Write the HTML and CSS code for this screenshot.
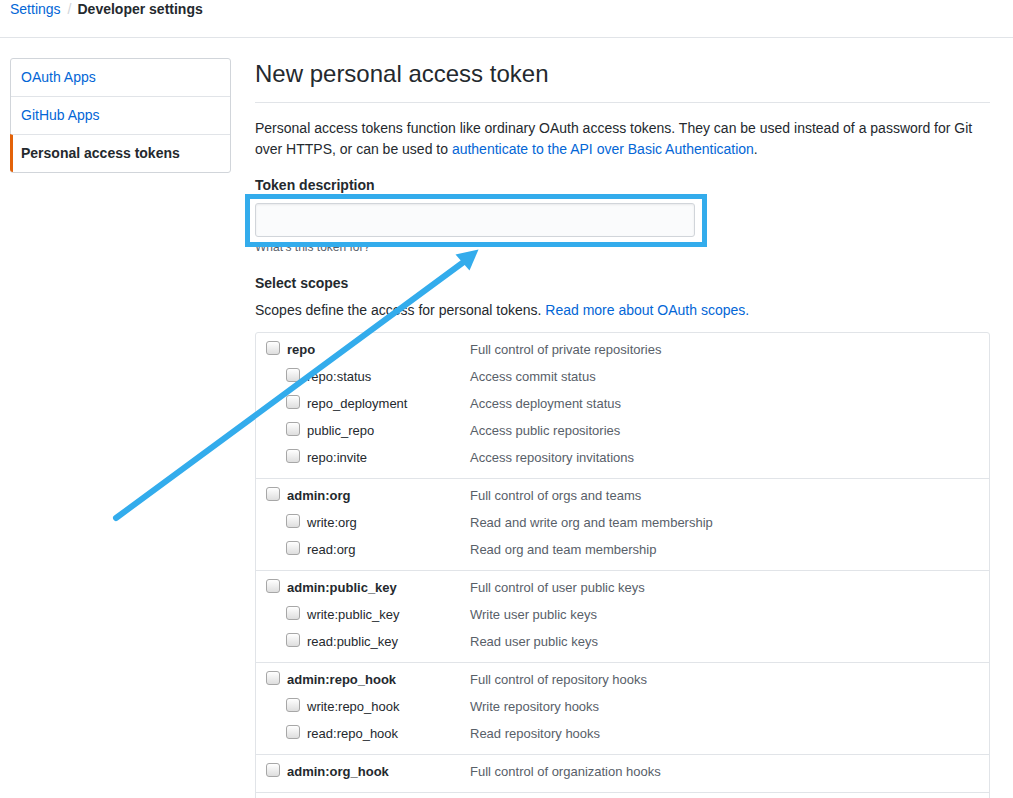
FILE: index.html
```html
<!DOCTYPE html>
<html lang="en">
<head>
<meta charset="utf-8">
<title>New personal access token</title>
<link rel="stylesheet" href="styles.css">
</head>
<body>
<div class="page">
  <header class="crumbs">
    <a class="crumb-link" href="#">Settings</a><span class="crumb-sep">/</span><strong class="crumb-current">Developer settings</strong>
  </header>

  <div class="layout">
    <nav class="menu">
      <a class="menu-item" href="#">OAuth Apps</a>
      <a class="menu-item" href="#">GitHub Apps</a>
      <a class="menu-item selected" href="#">Personal access tokens</a>
    </nav>

    <main class="main">
      <h2 class="subhead">New personal access token</h2>
      <p class="intro">Personal access tokens function like ordinary OAuth access tokens. They can be used instead of a password for Git over HTTPS, or can be used to <a class="link" href="#">authenticate to the API over Basic Authentication</a>.</p>

      <div class="form-group">
        <label class="label">Token description</label>
        <input class="input" type="text">
        <p class="note">What’s this token for?</p>
      </div>

      <h3 class="label scopes-title">Select scopes</h3>
      <p class="scopes-text">Scopes define the access for personal tokens. <a class="link" href="#">Read more about OAuth scopes.</a></p>

      <div class="scopes">
        <div class="group">
          <div class="row top"><span class="name"><span class="cb"></span>repo</span><span class="desc">Full control of private repositories</span></div>
          <div class="row sub"><span class="name"><span class="cb"></span>repo:status</span><span class="desc">Access commit status</span></div>
          <div class="row sub"><span class="name"><span class="cb"></span>repo_deployment</span><span class="desc">Access deployment status</span></div>
          <div class="row sub"><span class="name"><span class="cb"></span>public_repo</span><span class="desc">Access public repositories</span></div>
          <div class="row sub"><span class="name"><span class="cb"></span>repo:invite</span><span class="desc">Access repository invitations</span></div>
        </div>
        <div class="group">
          <div class="row top"><span class="name"><span class="cb"></span>admin:org</span><span class="desc">Full control of orgs and teams</span></div>
          <div class="row sub"><span class="name"><span class="cb"></span>write:org</span><span class="desc">Read and write org and team membership</span></div>
          <div class="row sub"><span class="name"><span class="cb"></span>read:org</span><span class="desc">Read org and team membership</span></div>
        </div>
        <div class="group">
          <div class="row top"><span class="name"><span class="cb"></span>admin:public_key</span><span class="desc">Full control of user public keys</span></div>
          <div class="row sub"><span class="name"><span class="cb"></span>write:public_key</span><span class="desc">Write user public keys</span></div>
          <div class="row sub"><span class="name"><span class="cb"></span>read:public_key</span><span class="desc">Read user public keys</span></div>
        </div>
        <div class="group">
          <div class="row top"><span class="name"><span class="cb"></span>admin:repo_hook</span><span class="desc">Full control of repository hooks</span></div>
          <div class="row sub"><span class="name"><span class="cb"></span>write:repo_hook</span><span class="desc">Write repository hooks</span></div>
          <div class="row sub"><span class="name"><span class="cb"></span>read:repo_hook</span><span class="desc">Read repository hooks</span></div>
        </div>
        <div class="group">
          <div class="row top"><span class="name"><span class="cb"></span>admin:org_hook</span><span class="desc">Full control of organization hooks</span></div>
        </div>
        <div class="group">
          <div class="row top"><span class="name"><span class="cb"></span>gist</span><span class="desc">Create gists</span></div>
        </div>
        <div class="group">
          <div class="row top"><span class="name"><span class="cb"></span>notifications</span><span class="desc">Access notifications</span></div>
        </div>
      </div>
    </main>
  </div>

  <svg class="annotation" width="1013" height="798" viewBox="0 0 1013 798" aria-hidden="true">
    <rect x="247.5" y="196.5" width="457" height="48" fill="none" stroke="#33acec" stroke-width="5"/>
    <line x1="116" y1="518" x2="465" y2="261" stroke="#33acec" stroke-width="6" stroke-linecap="round"/>
    <polygon points="478.5,249.5 455.5,254.5 469.5,270.5" fill="#33acec"/>
  </svg>
</div>
</body>
</html>
```

FILE: styles.css
```css
html {
  overflow: hidden;
}

body {
  margin: 0;
  background: #fff;
  color: #24292e;
  font-family: "Liberation Sans", Arial, sans-serif;
  font-size: 14px;
  line-height: 1.5;
}

.page {
  position: relative;
  width: 1013px;
  min-height: 798px;
}

.crumbs {
  border-bottom: 1px solid #e1e4e8;
  padding: 0 0 0 10px;
  box-sizing: border-box;
  height: 38px;
  line-height: 18px;
  font-size: 14px;
}

.crumb-link {
  color: #0366d6;
  text-decoration: none;
}

.crumb-sep {
  color: #d1d5da;
  padding: 0 6px 0 7px;
}

.crumb-current {
  font-weight: 700;
  color: #24292e;
}

.layout {
  display: flex;
  gap: 24px;
  padding: 20px 0 0 10px;
}

.menu {
  width: 221px;
  flex: none;
  align-self: flex-start;
  display: flex;
  flex-direction: column;
  border: 1px solid #d1d5da;
  border-radius: 3px;
  box-sizing: border-box;
  background: #fff;
}

.menu-item {
  display: block;
  padding: 8px 10px;
  line-height: 21px;
  color: #0366d6;
  text-decoration: none;
  border-top: 1px solid #e1e4e8;
}

.menu-item:first-child {
  border-top: 0;
}

.menu-item.selected {
  color: #24292e;
  font-weight: 700;
  margin-left: -1px;
  border-left: 3px solid #e36209;
  padding-left: 8px;
  border-bottom-left-radius: 3px;
}

.main {
  width: 735px;
  flex: none;
}

.subhead {
  margin: 0;
  font-size: 24px;
  font-weight: 400;
  line-height: 30px;
  padding-top: 1px;
  padding-bottom: 13px;
  border-bottom: 1px solid #e1e4e8;
  color: #24292e;
}

.intro {
  margin: 15px 0 0;
  line-height: 21px;
  color: #24292e;
}

.link {
  color: #0366d6;
  text-decoration: none;
}

.form-group {
  margin-top: 15px;
}

.label {
  display: block;
  margin: 0 0 7px;
  font-size: 14px;
  font-weight: 700;
  line-height: 21px;
  color: #24292e;
}

.input {
  display: block;
  box-sizing: border-box;
  width: 440px;
  height: 34px;
  margin: 0;
  padding: 6px 8px;
  font: inherit;
  background: #fafbfc;
  border: 1px solid #d1d5da;
  border-radius: 3px;
  box-shadow: inset 0 1px 2px rgba(27, 31, 35, 0.075);
}

.note {
  margin: 1px 0 0;
  font-size: 12px;
  line-height: 18px;
  color: #586069;
}

.scopes-title {
  margin: 17px 0 0;
}

.scopes-text {
  margin: 6px 0 0;
  line-height: 21px;
  color: #24292e;
}

.scopes {
  margin-top: 11px;
  border: 1px solid #e1e4e8;
  border-radius: 3px;
  font-size: 13px;
}

.group {
  padding: 3px 0 7px;
  border-top: 1px solid #e1e4e8;
}

.group:first-child {
  border-top: 0;
}

.row {
  display: flex;
  height: 27px;
  line-height: 27px;
}

.name {
  display: flex;
  align-items: flex-start;
  gap: 7px;
  width: 214px;
  flex: none;
  box-sizing: border-box;
  color: #24292e;
}

.row.top .name {
  padding-left: 10px;
  font-weight: 700;
}

.row.sub .name {
  padding-left: 30px;
}

.cb {
  flex: none;
  width: 12px;
  height: 12px;
  margin-top: 5px;
  border: 1px solid #a7a7a7;
  border-radius: 3px;
  background: linear-gradient(#ffffff, #dedede);
}

.desc {
  color: #586069;
}

.annotation {
  position: absolute;
  left: 0;
  top: 0;
  pointer-events: none;
}
```
